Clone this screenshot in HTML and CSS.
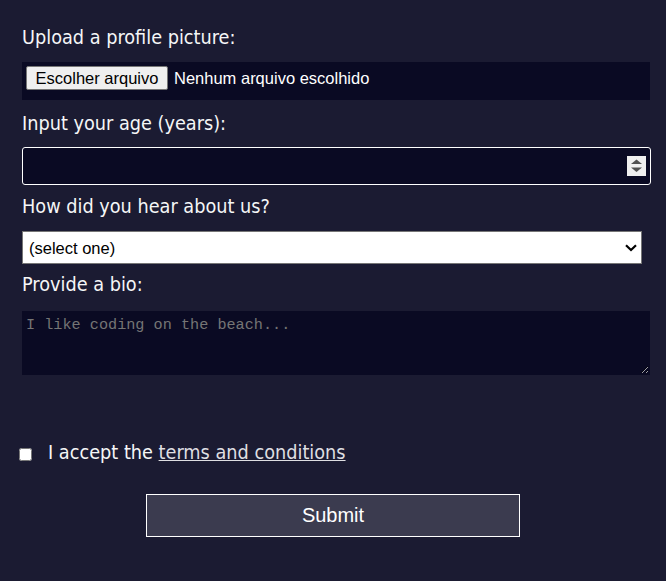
FILE: index.html
```html
<!DOCTYPE html>
<html lang="en">
<head>
<meta charset="utf-8">
<title>Survey form</title>
<link rel="stylesheet" href="styles.css">
</head>
<body>
<form class="form">
  <label class="label" for="pic">Upload a profile picture:</label>
  <label class="file" for="pic">
    <input id="pic" type="file" class="file-input">
    <span class="file-btn">Escolher arquivo</span>
    <span class="file-name">Nenhum arquivo escolhido</span>
  </label>

  <label class="label label-2" for="age">Input your age (years):</label>
  <div class="age-wrap">
    <input id="age" type="text" class="age" inputmode="numeric">
    <svg class="spinner" width="19" height="20" viewBox="0 0 19 20" aria-hidden="true">
      <rect width="19" height="20" fill="#efefef"/>
      <path d="M4 8 L9.5 3.5 L15 8 Z" fill="#505050"/>
      <path d="M4 11.5 L9.5 16 L15 11.5 Z" fill="#505050"/>
    </svg>
  </div>

  <label class="label label-3" for="ref">How did you hear about us?</label>
  <div class="select-wrap">
    <select id="ref" class="select">
      <option>(select one)</option>
      <option>freeCodeCamp News</option>
      <option>freeCodeCamp YouTube Channel</option>
      <option>freeCodeCamp Forum</option>
      <option>Other</option>
    </select>
    <svg class="chevron" width="12" height="8" viewBox="0 0 12 8" aria-hidden="true">
      <path d="M1 1.2 L6 6 L11 1.2" fill="none" stroke="#000" stroke-width="2.2"/>
    </svg>
  </div>

  <label class="label label-4" for="bio">Provide a bio:</label>
  <textarea id="bio" class="bio" placeholder="I like coding on the beach..."></textarea>

  <label class="terms" for="terms">
    <input id="terms" type="checkbox" class="check">
    <span>I accept the <a href="#" class="link">terms and conditions</a></span>
  </label>

  <input type="submit" value="Submit" class="submit">
</form>
</body>
</html>
```

FILE: styles.css
```css
html, body {
  margin: 0;
  padding: 0;
}

body {
  background: #1b1b32;
  color: #f5f6f7;
  font-family: "DejaVu Sans Condensed", "DejaVu Sans", sans-serif;
  font-size: 19.7px;
  min-height: 581px;
}

.form {
  display: flex;
  flex-direction: column;
  align-items: flex-start;
  padding: 27px 16px 0 22px;
}

.label {
  display: block;
  line-height: 22px;
}

.label-2 { margin-top: 13px; }
.label-3 { margin-top: 11px; }
.label-4 { margin-top: 10px; }

/* file picker */
.file {
  margin-top: 13px;
  width: 628px;
  height: 38px;
  box-sizing: border-box;
  background: #0a0a23;
  display: flex;
  align-items: flex-start;
  gap: 6px;
  padding: 4px 0 0 4px;
  font-family: "Liberation Sans", Arial, sans-serif;
  font-size: 16.5px;
  color: #ffffff;
  cursor: pointer;
}

.file-input {
  display: none;
}

.file-btn {
  box-sizing: border-box;
  width: 142px;
  height: 24px;
  line-height: 22px;
  text-align: center;
  background: #efefef;
  color: #000;
  border: 1px solid #767676;
  border-radius: 2px;
}

.file-name {
  line-height: 24px;
}

/* age */
.age-wrap {
  position: relative;
  margin-top: 12px;
}

.age {
  display: block;
  box-sizing: border-box;
  width: 629px;
  height: 38px;
  margin: 0;
  background: #0a0a23;
  border: 1px solid #ffffff;
  border-radius: 3px;
  color: #ffffff;
  outline: none;
  font-size: 16px;
}

.spinner {
  position: absolute;
  left: 605px;
  top: 9px;
}

/* select */
.select-wrap {
  position: relative;
  margin-top: 13px;
}

.select {
  display: block;
  box-sizing: border-box;
  width: 620px;
  height: 33px;
  margin: 0;
  padding: 0 0 0 6px;
  appearance: none;
  -webkit-appearance: none;
  background: #ffffff;
  border: 1px solid #767676;
  border-radius: 0;
  color: #000;
  font-family: "Liberation Sans", Arial, sans-serif;
  font-size: 16.5px;
}

.chevron {
  position: absolute;
  left: 603px;
  top: 13px;
  pointer-events: none;
}

/* bio */
.bio {
  display: block;
  box-sizing: border-box;
  width: 628px;
  height: 64px;
  margin: 15px 0 0 0;
  padding: 4px 3px;
  background: #0a0a23;
  border: 1px solid #0a0a23;
  color: #ffffff;
  font-family: "Liberation Mono", monospace;
  font-size: 15.2px;
  line-height: 18px;
}

.bio::placeholder {
  color: #757575;
}

/* terms */
.terms {
  display: flex;
  align-items: flex-start;
  margin-top: 67px;
  margin-left: -3px;
  line-height: 22px;
}

.check {
  width: 13px;
  height: 13px;
  margin: 6px 16px 0 0;
}

.link {
  color: #dfdfe2;
}

/* submit */
.submit {
  align-self: center;
  box-sizing: border-box;
  width: 374px;
  height: 43px;
  margin: 30px 0 0 -6px;
  background: #3b3b4f;
  border: 1px solid #ffffff;
  border-radius: 0;
  color: #ffffff;
  font-family: "Liberation Sans", Arial, sans-serif;
  font-size: 20px;
}
```
